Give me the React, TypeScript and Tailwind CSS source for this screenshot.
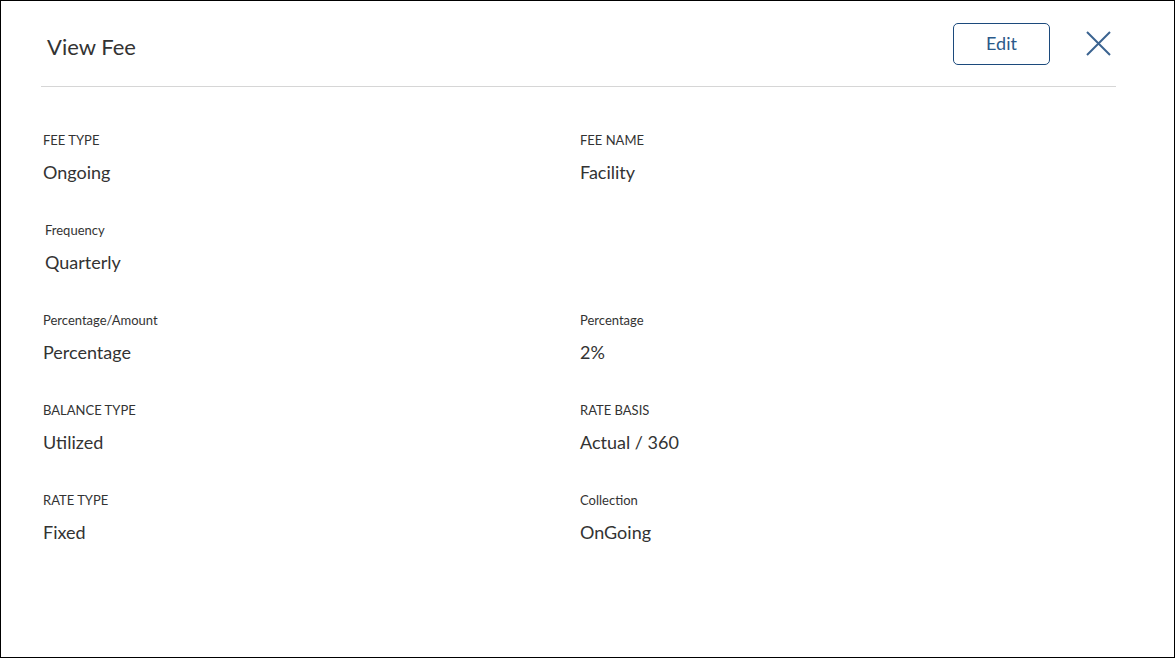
type Field = { label: string; value: string };

const rows: { left: Field; right?: Field; shift?: boolean }[] = [
  { left: { label: "FEE TYPE", value: "Ongoing" }, right: { label: "FEE NAME", value: "Facility" } },
  { left: { label: "Frequency", value: "Quarterly" }, shift: true },
  {
    left: { label: "Percentage/Amount", value: "Percentage" },
    right: { label: "Percentage", value: "2%" },
  },
  { left: { label: "BALANCE TYPE", value: "Utilized" }, right: { label: "RATE BASIS", value: "Actual / 360" } },
  { left: { label: "RATE TYPE", value: "Fixed" }, right: { label: "Collection", value: "OnGoing" } },
];

function FieldView({ field }: { field: Field }) {
  return (
    <div className="flex flex-col">
      <span className="text-[13px] leading-4 text-[#333]">{field.label}</span>
      <span className="mt-[12px] text-[18px] leading-6 text-[#333]">{field.value}</span>
    </div>
  );
}

export default function App() {
  return (
    <div
      className="h-[658px] w-[1175px] border border-black bg-white"
      style={{ fontFamily: '"Source Sans Pro", Lato, "Noto Sans", sans-serif' }}
    >
      {/* Header */}
      <div className="ml-[40px] mr-[58px] flex h-[86px] items-center justify-between border-b border-[#d6d6d6] pl-[6px]">
        <h1 className="mt-[6px] text-[22px] font-normal text-[#333]">View Fee</h1>
        <div className="flex items-center gap-[36px] pr-[5px]">
          <button className="ml-[1px] flex h-[42px] w-[97px] items-center justify-center rounded-[5px] border border-[#1c4a7c] text-[18px] text-[#2b5a8a]">
            Edit
          </button>
          <svg width="25" height="25" viewBox="0 0 25 25" className="text-[#3b6390]">
            <path d="M1 1L24 24M24 1L1 24" stroke="currentColor" strokeWidth="2" fill="none" />
          </svg>
        </div>
      </div>

      {/* Fields */}
      <div className="ml-[42px] mt-[45px] flex flex-col gap-[38px]">
        {rows.map((row, i) => (
          <div key={i} className="grid grid-cols-[537px_1fr]">
            <div className={row.shift ? "pl-[2px]" : ""}>
              <FieldView field={row.left} />
            </div>
            <div>{row.right && <FieldView field={row.right} />}</div>
          </div>
        ))}
      </div>
    </div>
  );
}
